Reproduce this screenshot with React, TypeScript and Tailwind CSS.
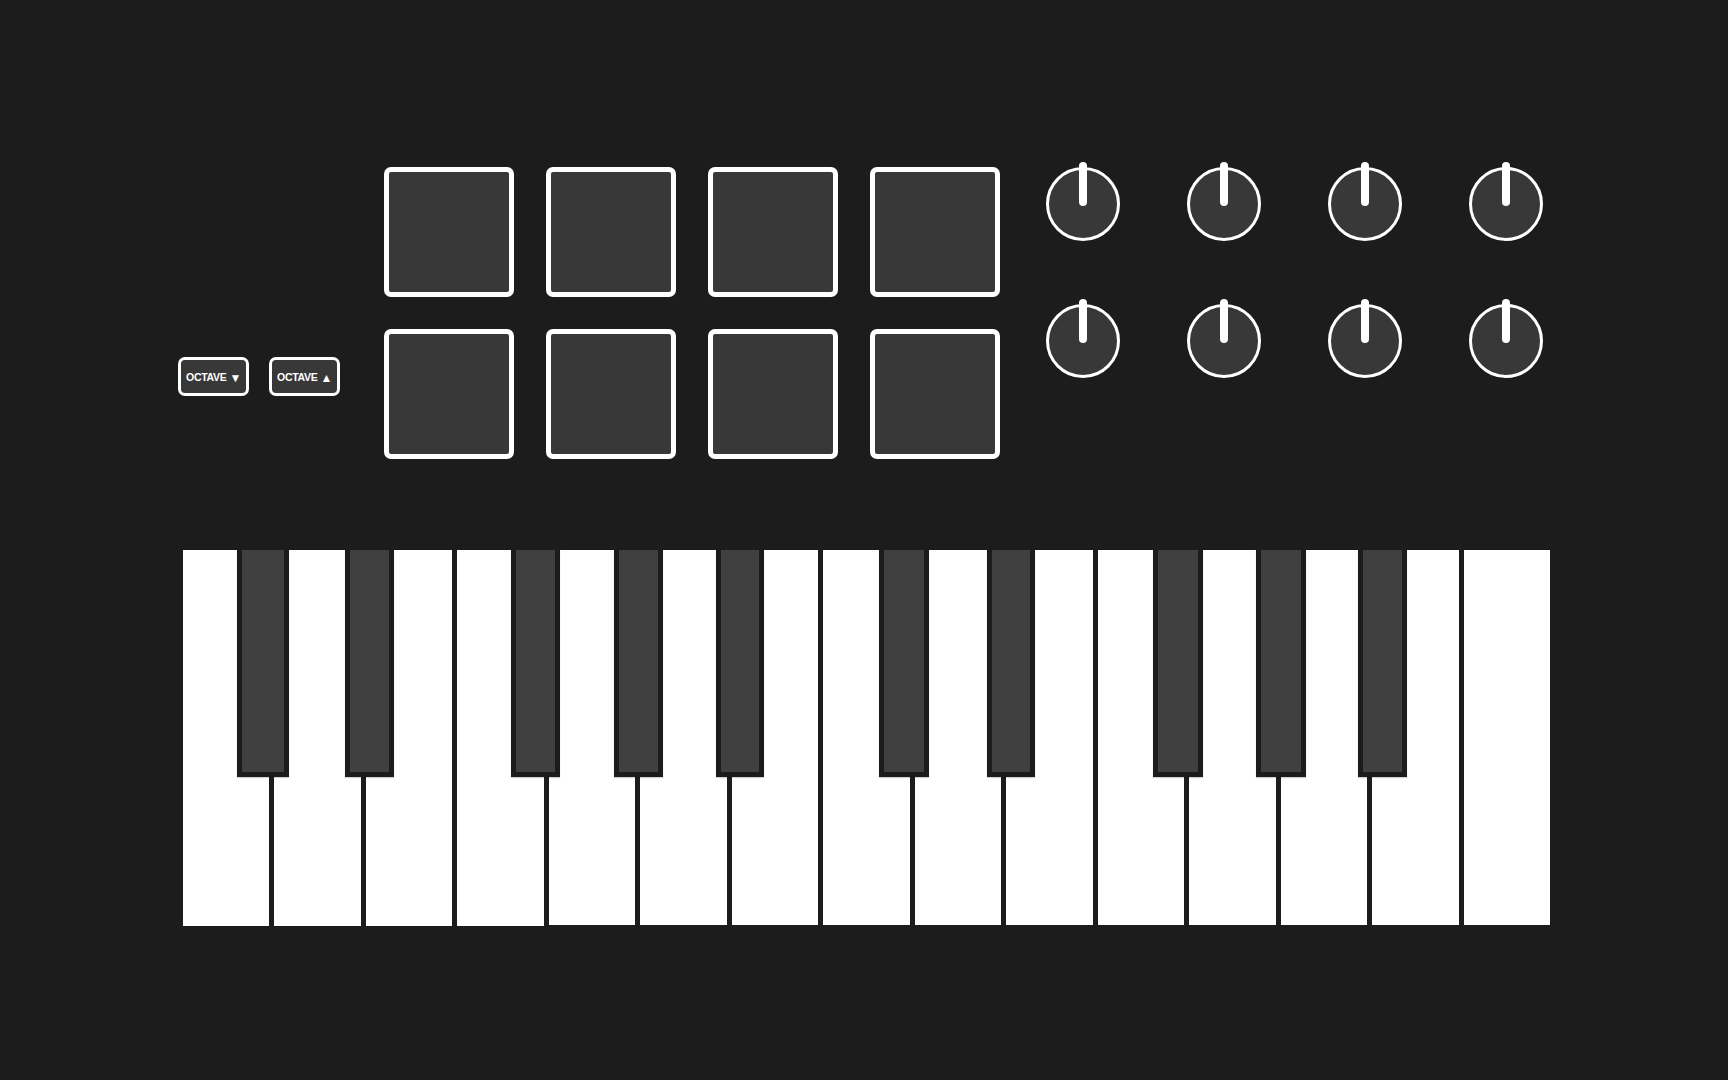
import React from "react"

const whiteKeys = [
  "h-[376px]",
  "h-[376px]",
  "h-[376px]",
  "h-[376px]",
  "h-[375px]",
  "h-[375px]",
  "h-[375px]",
  "h-[375px]",
  "h-[375px]",
  "h-[375px]",
  "h-[375px]",
  "h-[375px]",
  "h-[375px]",
  "h-[375px]",
  "h-[375px]",
]

// black keys sit over the white row
const blackKeys = [
  "left-[54px] w-[52px]",
  "left-[162px] w-[49px]",
  "left-[328px] w-[49px]",
  "left-[431px] w-[49px]",
  "left-[533px] w-[48px]",
  "left-[696px] w-[50px]",
  "left-[804px] w-[48px]",
  "left-[970px] w-[50px]",
  "left-[1073px] w-[50px]",
  "left-[1175px] w-[49px]",
]

const OctaveButton = ({ label, up }: { label: string; up?: boolean }) => (
  <button className="flex h-[39px] w-[71px] items-center justify-center gap-[3px] rounded-[7px] border-[3px] border-white bg-[#383838] pt-[3px] text-[10.5px] font-bold tracking-[-0.03em] text-white [font-family:'Liberation_Sans',Arial,sans-serif]">
    <span>{label}</span>
    <span className="text-[12px] leading-none">{up ? "▲" : "▼"}</span>
  </button>
)

const Pad = () => (
  <div className="h-[130px] w-[130px] rounded-[7px] border-[5px] border-white bg-[#383838]" />
)

const Knob = () => (
  <div className="relative h-[74px] w-[74px] rounded-full border-[3px] border-white bg-[#383838]">
    <div className="absolute left-1/2 top-[-8px] h-[44px] w-[8px] -translate-x-1/2 rounded-full bg-white" />
  </div>
)

export default function App() {
  return (
    <div className="h-screen w-full overflow-hidden bg-[#1c1c1c] pl-[178px] pt-[167px]">
      <div className="flex items-start">
        <div className="mt-[190px] flex gap-[20px]">
          <OctaveButton label="OCTAVE" />
          <OctaveButton label="OCTAVE" up />
        </div>
        <div className="ml-[44px] grid grid-cols-4 gap-[32px]">
          {Array.from({ length: 8 }).map((_, i) => (
            <Pad key={i} />
          ))}
        </div>
        <div className="ml-[46px] grid grid-cols-4 gap-x-[67px] gap-y-[63px]">
          {Array.from({ length: 8 }).map((_, i) => (
            <Knob key={i} />
          ))}
        </div>
      </div>

      <div className="relative ml-[5px] mt-[91px] flex w-[1367px] items-start gap-[5px]">
        {whiteKeys.map((h, i) => (
          <div key={i} className={`flex-1 bg-white ${h}`} />
        ))}
        {blackKeys.map((cls, i) => (
          <div
            key={i}
            className={`absolute top-0 h-[227px] border-[5px] border-t-0 border-[#1c1c1c] bg-[#404040] shadow-[0_1px_1px_rgba(0,0,0,0.18)] ${cls}`}
          />
        ))}
      </div>
    </div>
  )
}
